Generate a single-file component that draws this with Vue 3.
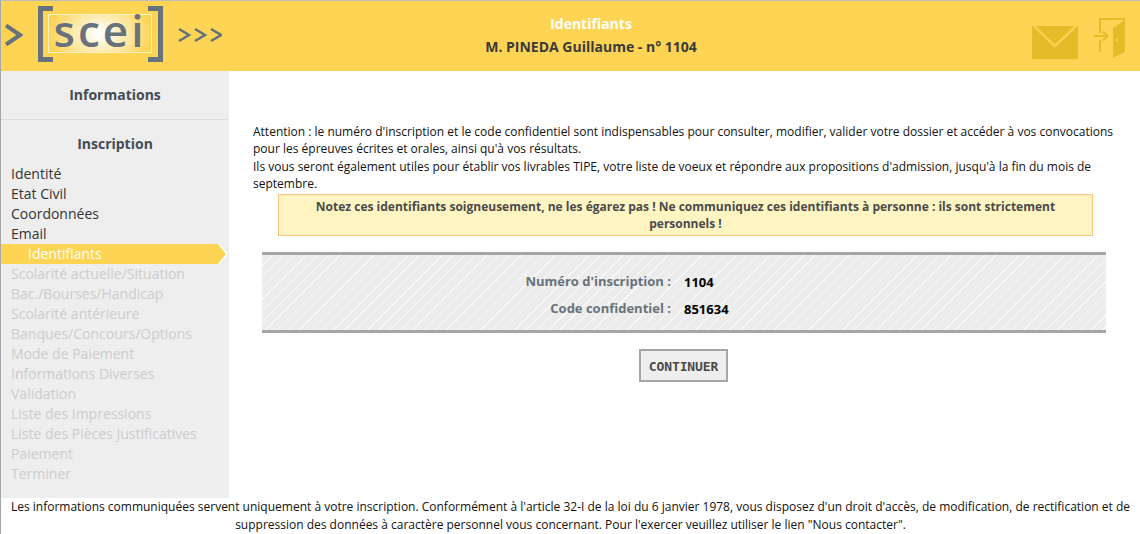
<script setup>
const menu = [
  { label: 'Identité', state: 'done' },
  { label: 'Etat Civil', state: 'done' },
  { label: 'Coordonnées', state: 'done' },
  { label: 'Email', state: 'done' },
  { label: 'Identifiants', state: 'active' },
  { label: 'Scolarité actuelle/Situation', state: 'off' },
  { label: 'Bac./Bourses/Handicap', state: 'off' },
  { label: 'Scolarité antérieure', state: 'off' },
  { label: 'Banques/Concours/Options', state: 'off' },
  { label: 'Mode de Paiement', state: 'off' },
  { label: 'Informations Diverses', state: 'off' },
  { label: 'Validation', state: 'off' },
  { label: 'Liste des Impressions', state: 'off' },
  { label: 'Liste des Pièces Justificatives', state: 'off' },
  { label: 'Paiement', state: 'off' },
  { label: 'Terminer', state: 'off' }
]
</script>

<template>
  <div class="page">
    <header class="top">
      <div class="logo">
        <svg class="chev" width="18" height="24" viewBox="0 0 18 24"><path d="M1 2.5 L15 12 L1 21.5" fill="none" stroke="#68727c" stroke-width="4"/></svg>
        <div class="mark">
          <div class="bracket left"></div>
          <div class="bracket right"></div>
          <div class="word"><span>scei</span></div>
        </div>
        <svg class="chevs" width="44" height="16" viewBox="0 0 44 16">
          <path d="M1 2 L11 8 L1 14 M17 2 L27 8 L17 14 M33 2 L43 8 L33 14" fill="none" stroke="#68727c" stroke-width="2.6"/>
        </svg>
      </div>
      <div class="title">
        <div class="t1">Identifiants</div>
        <div class="t2">M. PINEDA Guillaume - n° 1104</div>
      </div>
      <div class="icons">
        <svg class="mail" width="46" height="33" viewBox="0 0 46 33">
          <rect width="46" height="33" fill="#e6bb2a"/>
          <path d="M2 0 L23 20 L44 0" fill="none" stroke="#f9cf50" stroke-width="2.5"/>
        </svg>
        <svg width="31" height="40" viewBox="0 0 31 40">
          <path d="M6 15 V1 H30 V33 M6 22 V34" fill="none" stroke="#e6bb2a" stroke-width="2"/>
          <path d="M19 10 L31 2 V34 L19 40 Z" fill="#e6bb2a"/>
          <path d="M0 18 H13 M9 13.5 L13.5 18 L9 22.5" fill="none" stroke="#e6bb2a" stroke-width="2"/>
          <rect x="22" y="21" width="2" height="2" fill="#fed455"/>
        </svg>
      </div>
    </header>

    <div class="middle">
      <aside class="side">
        <div class="info">Informations</div>
        <div class="ins">Inscription</div>
        <ul class="menu">
          <li v-for="m in menu" :key="m.label" :class="m.state">{{ m.label }}</li>
        </ul>
      </aside>

      <main class="main">
        <p class="intro">Attention : le numéro d'inscription et le code confidentiel sont indispensables pour consulter, modifier, valider votre dossier et accéder à vos convocations pour les épreuves écrites et orales, ainsi qu'à vos résultats.<br>Ils vous seront également utiles pour établir vos livrables TIPE, votre liste de voeux et répondre aux propositions d'admission, jusqu'à la fin du mois de septembre.</p>
        <div class="notice">Notez ces identifiants soigneusement, ne les égarez pas ! Ne communiquez ces identifiants à personne : ils sont strictement personnels !</div>
        <div class="ids">
          <div class="row"><span class="lab">Numéro d'inscription :</span><span class="val">1104</span></div>
          <div class="row"><span class="lab">Code confidentiel :</span><span class="val">851634</span></div>
        </div>
        <div class="act"><button class="btn" type="button">CONTINUER</button></div>
      </main>
    </div>

    <footer class="foot">Les informations communiquées servent uniquement à votre inscription. Conformément à l'article 32-I de la loi du 6 janvier 1978, vous disposez d'un droit d'accès, de modification, de rectification et de suppression des données à caractère personnel vous concernant. Pour l'exercer veuillez utiliser le lien "Nous contacter".</footer>
  </div>
</template>

<style>
html, body { margin: 0; background: #fff; overflow: hidden; }
</style>

<style scoped>
.page {
  width: 1140px;
  height: 534px;
  box-sizing: border-box;
  display: flex;
  flex-direction: column;
  font-family: "Open Sans", sans-serif;
  font-size: 12px;
  color: #000;
  border-left: 1px solid #a6a6a6;
  border-top: 1px solid #bdbdbd;
  overflow: hidden;
}
.top {
  height: 70px;
  flex: none;
  background: #fed455;
  display: flex;
}
.logo { display: flex; align-items: flex-start; width: 229px; flex: none; height: 70px; }
.chev { margin: 22px 0 0 4px; flex: none; }
.mark {
  position: relative;
  display: flex;
  justify-content: space-between;
  flex: none;
  width: 125px;
  height: 56px;
  margin: 5px 0 0 15px;
}
.bracket { width: 15px; border: 5px solid #68727c; box-sizing: border-box; }
.bracket.left { border-right: 0; }
.bracket.right { border-left: 0; }
.word {
  position: absolute;
  left: 10px;
  top: 8px;
  width: 104px;
  height: 39px;
  border: 1px solid #fff3c4;
  background: radial-gradient(ellipse 52px 36px at 50% 50%, #fff 5%, #fed455 100%);
  box-sizing: border-box;
  display: flex;
  justify-content: center;
  align-items: center;
}
.word span {
  font-size: 44px;
  font-weight: 600;
  color: #68727c;
  letter-spacing: 3px;
  line-height: 38px;
  margin-top: -7px;
}
.chevs { margin: 26px 0 0 15px; flex: none; }
.title {
  flex: 1;
  text-align: center;
  font-weight: 700;
  font-size: 14px;
  line-height: 23px;
  padding: 11px 80px 0 0;
}
.t1 { color: #fff; }
.t2 { color: #3a3a3a; }
.icons {
  flex: none;
  width: 108px;
  box-sizing: border-box;
  display: flex;
  align-items: flex-start;
  gap: 16px;
  padding-top: 17px;
}
.mail { margin-top: 8px; }
.middle { flex: 1; display: flex; min-height: 0; }
.side { width: 228px; flex: none; background: #eee; font-size: 14px; }
.info { height: 49px; line-height: 48px; text-align: center; font-weight: 700; color: #444c54; border-bottom: 1px solid #ddd; box-sizing: border-box; }
.ins { text-align: center; font-weight: 700; color: #444c54; line-height: 20px; margin-top: 14px; margin-bottom: 10px; }
.menu { list-style: none; margin: 0; padding: 0; }
.menu li { height: 20px; line-height: 20px; padding-left: 10px; color: #333; white-space: nowrap; }
.menu li.off { color: #ccc; }
.menu li.active {
  color: #fff;
  background: #fff;
  padding-left: 27px;
  position: relative;
  clip-path: polygon(0 0, 219px 0, 227px 50%, 219px 100%, 0 100%);
}
.menu li.active::before {
  content: "";
  position: absolute;
  inset: 0;
  z-index: -1;
  background: #fed455;
  clip-path: polygon(0 0, 217px 0, 225px 50%, 217px 100%, 0 100%);
}
.main { flex: 1; min-width: 0; padding: 52px 24px 0 24px; }
.intro { margin: 0; line-height: 17.3px; color: #111; font-size: 12px; }
.notice {
  margin: 2px 23px 0 25px;
  border: 1px solid #fbc776;
  background: #fff5c3;
  color: #4a4a4a;
  font-weight: 700;
  text-align: center;
  line-height: 17px;
  padding: 3px 30px;
}
.ids {
  margin: 16px 10px 0 9px;
  height: 81px;
  border-top: 3px solid #a6a6a6;
  border-bottom: 3px solid #a6a6a6;
  background: repeating-linear-gradient(135deg, #ececec 0 7px, #f9f9f9 7px 8px);
  padding-top: 12px;
  box-sizing: border-box;
}
.row { display: flex; height: 27px; align-items: center; }
.lab { width: 409px; text-align: right; font-weight: 700; font-size: 13px; color: #68727c; }
.val { margin-left: 13px; font-weight: 700; color: #000; font-size: 13px; padding-top: 2px; }
.act { display: flex; justify-content: center; margin-top: 16px; padding-right: 2px; }
.btn {
  width: 89px;
  height: 33px;
  border: 2.5px solid #a6a6a6;
  background: #eee;
  color: #4a4a4a;
  font-family: "DejaVu Sans Mono", monospace;
  font-weight: 700;
  font-size: 13px;
  letter-spacing: -0.1px;
  padding: 2px 0 0;
}
.foot {
  flex: none;
  height: 36px;
  text-align: center;
  line-height: 18px;
  font-size: 12px;
  padding: 0 8px;
  color: #111;
}
</style>
